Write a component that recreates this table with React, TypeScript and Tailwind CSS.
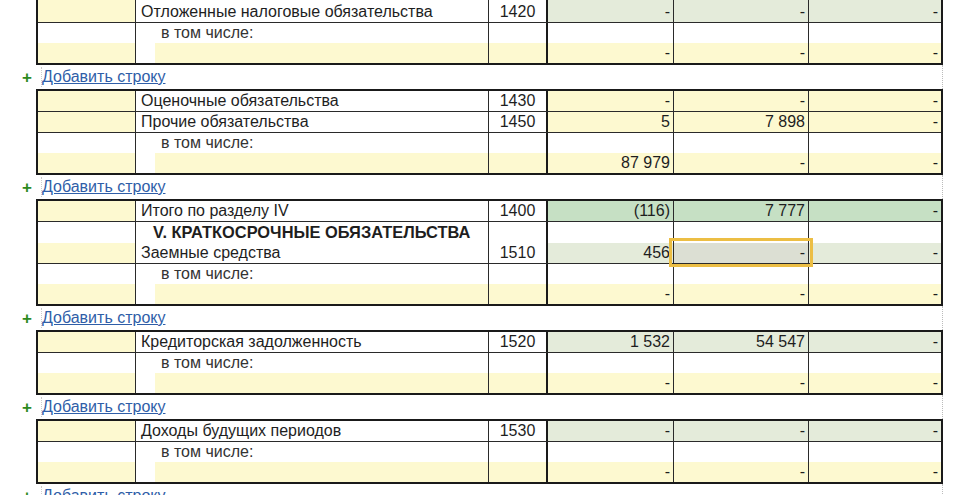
import React from "react";

// палитра формы баланса
const YEL = "bg-[#fdf9d0]";
const PALE = "bg-[#e4ebda]";
const TOTAL = "bg-[#c6e0c4]";

const W = [
  "w-[98px] border-r border-[#2a2a2a]",
  "w-[353px] border-r border-[#2a2a2a]",
  "w-[59px] border-r-2 border-[#1a1a1a]",
  "w-[126px] border-r border-[#2a2a2a]",
  "w-[135px] border-r border-[#2a2a2a]",
  "w-[132px]",
];

function MainRow({
  name,
  code,
  vals,
  tone,
  last,
  tall,
}: {
  name: string;
  code: string;
  vals: string[];
  tone: string;
  last?: boolean;
  tall?: boolean;
}) {
  return (
    <div className={`flex ${tall ? "h-[23px]" : "h-[21px]"} ${last ? "" : "border-b border-[#2a2a2a]"}`}>
      <div className={`${W[0]} ${YEL}`} />
      <div className={`${W[1]} pl-[5px] flex items-end leading-[20px]`}>{name}</div>
      <div className={`${W[2]} flex items-end justify-center leading-[20px]`}>{code}</div>
      {vals.map((v, i) => (
        <div key={i} className={`${W[3 + i]} ${tone} flex items-end justify-end pr-[3px] leading-[20px]`}>
          {v}
        </div>
      ))}
    </div>
  );
}

function SubRow({ vals = ["-", "-", "-"] }: { vals?: string[] }) {
  return (
    <div className="flex h-[40px]">
      <div className={`${W[0]} flex flex-col`}>
        <div className="h-[20px]" />
        <div className={`h-[20px] ${YEL}`} />
      </div>
      <div className={`${W[1]} flex flex-col`}>
        <div className="h-[20px] pl-[25px] leading-[20px] text-[#333]">в том числе:</div>
        <div className={`h-[20px] ml-[19px] ${YEL}`} />
      </div>
      <div className={`${W[2]} flex flex-col`}>
        <div className="h-[20px]" />
        <div className={`h-[20px] ${YEL}`} />
      </div>
      {vals.map((v, i) => (
        <div key={i} className={`${W[3 + i]} flex flex-col`}>
          <div className="h-[20px]" />
          <div className={`h-[20px] ${YEL} flex items-end justify-end pr-[3px] leading-[20px]`}>{v}</div>
        </div>
      ))}
    </div>
  );
}

function HeadRow() {
  return (
    <div className="flex h-[42px] border-b border-[#2a2a2a]">
      <div className={`${W[0]} flex flex-col`}>
        <div className="h-[21px]" />
        <div className={`h-[20px] ${YEL}`} />
      </div>
      <div className={`${W[1]} flex flex-col`}>
        <div className="h-[21px] pl-[17px] font-bold text-[16.4px] leading-[21px]">V. КРАТКОСРОЧНЫЕ ОБЯЗАТЕЛЬСТВА</div>
        <div className="h-[20px] pl-[5px] leading-[20px]">Заемные средства</div>
      </div>
      <div className={`${W[2]} flex flex-col`}>
        <div className="h-[21px]" />
        <div className="h-[20px] flex justify-center leading-[20px]">1510</div>
      </div>
      <div className={`${W[3]} flex flex-col`}>
        <div className="h-[21px]" />
        <div className={`h-[20px] ${PALE} flex justify-end pr-[3px] leading-[20px]`}>456</div>
      </div>
      <div className={`${W[4]} flex flex-col relative`}>
        <div className="h-[21px]" />
        <div className="h-[20px] bg-[#dcdfd3] flex justify-end pr-[3px] leading-[20px]">-</div>
        <div className="absolute left-[-5px] top-[16px] w-[144px] h-[29px] border-[3px] border-[#ecbe44]" />
      </div>
      <div className={`${W[5]} flex flex-col`}>
        <div className="h-[21px]" />
        <div className={`h-[20px] ${PALE} flex justify-end pr-[3px] leading-[20px]`}>-</div>
      </div>
    </div>
  );
}

function Block({ children, first }: { children: React.ReactNode; first?: boolean }) {
  return (
    <div className={`w-[907px] border-2 border-[#1a1a1a] ${first ? "mt-[-2px]" : ""}`}>{children}</div>
  );
}

function AddRow() {
  return (
    <div className="h-[24px] w-[907px] flex items-center border-r border-dotted border-[#bbb]">
      <span className="ml-[-14px] w-[14px] text-[#2e8b1e] font-black text-[17px] leading-none">+</span>
      <a className="ml-[5px] text-[#2f5ea8] underline leading-[20px] border-l border-dotted border-[#ccc]">
        Добавить строку
      </a>
    </div>
  );
}

export default function App() {
  return (
    <div className="w-[973px] h-[495px] overflow-hidden bg-white text-[16px] text-[#1e1e1e] font-['Liberation_Sans',Arial,sans-serif]">
      <div className="ml-[36px]">
        <Block first>
          <MainRow tall name="Отложенные налоговые обязательства" code="1420" vals={["-", "-", "-"]} tone={PALE} />
          <SubRow />
        </Block>
        <AddRow />
        <Block>
          <MainRow name="Оценочные обязательства" code="1430" vals={["-", "-", "-"]} tone={YEL} />
          <MainRow name="Прочие обязательства" code="1450" vals={["5", "7 898", "-"]} tone={YEL} />
          <SubRow vals={["87 979", "-", "-"]} />
        </Block>
        <AddRow />
        <Block>
          <MainRow name="Итого по разделу IV" code="1400" vals={["(116)", "7 777", "-"]} tone={TOTAL} />
          <HeadRow />
          <SubRow />
        </Block>
        <AddRow />
        <Block>
          <MainRow name="Кредиторская задолженность" code="1520" vals={["1 532", "54 547", "-"]} tone={PALE} />
          <SubRow />
        </Block>
        <AddRow />
        <Block>
          <MainRow name="Доходы будущих периодов" code="1530" vals={["-", "-", "-"]} tone={PALE} />
          <SubRow />
        </Block>
        <AddRow />
      </div>
    </div>
  );
}
